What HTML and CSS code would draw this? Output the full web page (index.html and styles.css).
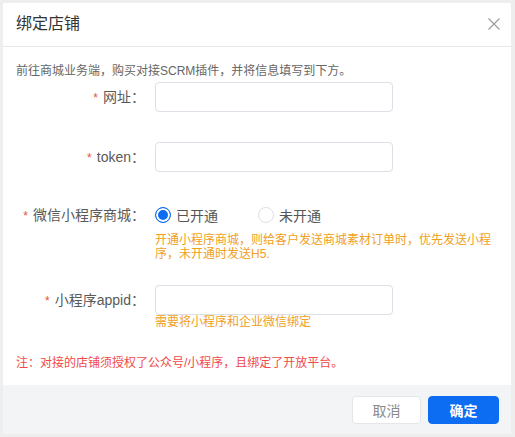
FILE: index.html
```html
<!DOCTYPE html>
<html lang="zh-CN">
<head>
  <meta charset="UTF-8" />
  <meta name="viewport" content="width=device-width, initial-scale=1.0" />
  <title>绑定店铺</title>
  <link rel="stylesheet" href="styles.css">
</head>
<body>
  <div class="modal">
    <div class="modal-header">
      <span class="modal-title">绑定店铺</span>
      <button class="close-btn" aria-label="关闭">
        <svg width="12" height="12" viewBox="0 0 12 12">
          <path d="M0.5 0.5 L11.5 11.5 M11.5 0.5 L0.5 11.5" stroke="#9a9a9a" stroke-width="1.1" fill="none" />
        </svg>
      </button>
    </div>

    <div class="modal-body">
      <p class="intro">前往商城业务端，购买对接SCRM插件，并将信息填写到下方。</p>

      <div class="form-item">
        <label class="form-label" for="shopUrl"><span class="star">*</span>网址：</label>
        <div class="form-control">
          <input type="text" id="shopUrl">
        </div>
      </div>

      <div class="form-item compact">
        <label class="form-label" for="token"><span class="star">*</span>token：</label>
        <div class="form-control">
          <input type="text" id="token">
        </div>
      </div>

      <div class="form-item has-tip">
        <label class="form-label"><span class="star">*</span>微信小程序商城：</label>
        <div class="form-control">
          <div class="radio-group">
            <label class="radio checked"><span class="radio-dot"></span>已开通</label>
            <label class="radio"><span class="radio-dot"></span>未开通</label>
          </div>
          <div class="tip">开通小程序商城，则给客户发送商城素材订单时，优先发送小程序，未开通时发送H5.</div>
        </div>
      </div>

      <div class="form-item has-tip last">
        <label class="form-label" for="appid"><span class="star">*</span>小程序appid：</label>
        <div class="form-control">
          <input type="text" id="appid">
          <div class="tip tight">需要将小程序和企业微信绑定</div>
        </div>
      </div>

      <p class="note">注：对接的店铺须授权了公众号/小程序，且绑定了开放平台。</p>
    </div>

    <div class="modal-footer">
      <button class="btn btn-cancel">取消</button>
      <button class="btn btn-primary">确定</button>
    </div>
  </div>
</body>
</html>
```

FILE: styles.css
```css
body {
  margin: 0;
  padding: 3px 4px 3px 3px;
  background-color: #eeeeee;
  font-family: "Liberation Sans", "Noto Sans CJK SC", sans-serif;
}

.modal {
  width: 508px;
  height: 431px;
  background-color: #fff;
  display: flex;
  flex-direction: column;
}

.modal-header {
  height: 43px;
  border-bottom: 1px solid #e8e8e8;
  display: flex;
  align-items: center;
  justify-content: space-between;
  padding: 0 11px 0 13px;
}

.modal-title {
  font-size: 16px;
  color: #333;
  line-height: 20px;
  margin-top: -1px;
}

.close-btn {
  background: none;
  border: none;
  padding: 0;
  width: 12px;
  height: 12px;
  cursor: pointer;
  margin-top: -2px;
}

.close-btn svg {
  display: block;
}

.modal-body {
  flex: 1;
  padding: 16px 13px 0;
}

.intro {
  margin: 0;
  font-size: 12px;
  line-height: 16px;
  color: #666;
}

.form-item {
  display: flex;
  gap: 10px;
  margin-top: 3px;
  margin-bottom: 29px;
}

.form-item + .form-item {
  margin-top: 0;
}

.form-item.compact {
  margin-bottom: 27px;
}

.form-item.has-tip {
  margin-bottom: 24px;
}

.form-item.last {
  margin-bottom: 26px;
}

.form-label {
  width: 129px;
  flex-shrink: 0;
  text-align: right;
  font-size: 14px;
  line-height: 30px;
  color: #5a5a5a;
  white-space: nowrap;
}

.star {
  color: #e5533d;
  font-size: 12px;
  margin-right: 5px;
}

.form-control {
  flex: 1;
}

.form-control input {
  display: block;
  box-sizing: border-box;
  width: 238px;
  height: 30px;
  border: 1px solid #dcdfe6;
  border-radius: 4px;
  padding: 0 10px;
  font-size: 14px;
  outline: none;
}

.radio-group {
  display: flex;
  gap: 40px;
  height: 30px;
  align-items: center;
}

.radio {
  display: flex;
  align-items: center;
  font-size: 14px;
  color: #555;
  cursor: pointer;
}

.radio-dot {
  box-sizing: border-box;
  width: 16px;
  height: 16px;
  border: 1px solid #dcdfe6;
  border-radius: 50%;
  margin-right: 5px;
  background-color: #fff;
}

.radio.checked .radio-dot {
  border: 1.5px solid #0c6cf2;
  box-shadow: inset 0 0 0 2px #fff;
  background-color: #0c6cf2;
}

.tip {
  margin-top: 3px;
  font-size: 12px;
  line-height: 14px;
  color: #f0a020;
}

.tip.tight {
  margin-top: 0;
}

.note {
  margin: 0;
  font-size: 12px;
  line-height: 16px;
  color: #f04a4a;
}

.modal-footer {
  height: 49px;
  background-color: #f3f4f6;
  display: flex;
  justify-content: flex-end;
  align-items: center;
  gap: 7px;
  padding-right: 12px;
}

.btn {
  height: 28px;
  border-radius: 4px;
  font-size: 14px;
  font-family: "Noto Sans CJK SC", sans-serif;
  cursor: pointer;
  padding: 0;
}

.btn-cancel {
  width: 69px;
  background-color: #fff;
  border: 1px solid #e4e6ea;
  color: #8a8a8a;
}

.btn-primary {
  width: 71px;
  background-color: #0c6cf2;
  border: 1px solid #0c6cf2;
  color: #fff;
  font-weight: bold;
}
```
